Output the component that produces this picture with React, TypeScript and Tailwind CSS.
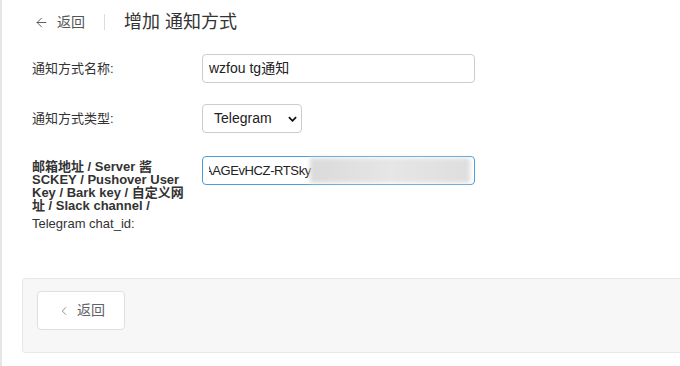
import React from 'react';
import { ArrowLeft, ChevronLeft } from 'lucide-react';

const font = "font-['Liberation_Sans','Noto_Sans_CJK_SC',sans-serif]";

export default function App() {
  return (
    <div className={`flex w-[680px] h-[366px] overflow-hidden bg-white border-l-2 border-[#e6e6e6] text-[#333] ${font}`}>
      <div className="flex flex-col w-full">
        {/* Header */}
        <div className="flex items-center h-[44px] pl-[32px] shrink-0">
          <button className="flex items-center gap-[8px] text-[14px] text-[#555]">
            <ArrowLeft className="w-[15px] h-[15px]" strokeWidth={1.5} />
            <span>返回</span>
          </button>
          <div className="w-px h-[16px] bg-[#dcdcdc] ml-[19px] mr-[19px]" />
          <h1 className="text-[18px] text-[#333]">增加 通知方式</h1>
        </div>

        {/* Form */}
        <div className="flex flex-col pl-[30px] text-[13px]">
          <div className="flex items-center mt-[10px]">
            <label className="w-[170px] shrink-0">通知方式名称:</label>
            <div className="flex items-center w-[273px] h-[29px] px-[6px] border border-[#ccc] rounded-[4px] text-[14px] text-[#222]">
              wzfou tg通知
            </div>
          </div>

          <div className="flex items-center mt-[21px]">
            <label className="w-[170px] shrink-0">通知方式类型:</label>
            <div className="flex items-center justify-between w-[100px] h-[29px] pl-[11px] pr-[4px] border border-[#ccc] rounded-[4px] text-[14px] text-[#222]">
              <span>Telegram</span>
              <svg viewBox="0 0 10 6" className="w-[9px] h-[6px]">
                <path d="M1 1l4 4 4-4" fill="none" stroke="#111" strokeWidth={2} />
              </svg>
            </div>
          </div>

          <div className="flex items-start mt-[23px]">
            <div className="w-[170px] shrink-0 mt-[4px]">
              <div className="font-semibold leading-[13px] pr-[12px]">
                邮箱地址 / Server 酱 SCKEY / Pushover User Key / Bark key / 自定义网址 / Slack channel /
              </div>
              <div className="leading-[18px] mt-[3px]">Telegram chat_id:</div>
            </div>
            <div className="relative flex items-center w-[273px] h-[29px] pl-[6px] border border-[#4c9fd6] rounded-[4px] text-[13px] text-[#222]">
              <div className="overflow-hidden w-[260px]">
                <span className="block whitespace-nowrap -ml-[5px] tracking-[-0.4px]">AAGEvHCZ-RTSky</span>
              </div>
              <div className="absolute left-[107px] top-[1px] w-[160px] h-[25px] bg-gradient-to-r from-[#dadada] via-[#e6e6e6] to-[#dedede] blur-[2px]" />
            </div>
          </div>
        </div>

        {/* Footer panel */}
        <div className="ml-[20px] w-[700px] mt-[45px] h-[75px] pt-[12px] pl-[14px] bg-[#f7f7f7] border border-[#e8e8e8] rounded-[3px] shrink-0">
          <button className="flex items-center justify-center gap-[6px] w-[88px] h-[39px] bg-white border border-[#dcdfe6] rounded-[4px] text-[14px] text-[#606266]">
            <ChevronLeft className="w-[14px] h-[14px]" strokeWidth={1.2} />
            <span>返回</span>
          </button>
        </div>
      </div>
    </div>
  );
}
